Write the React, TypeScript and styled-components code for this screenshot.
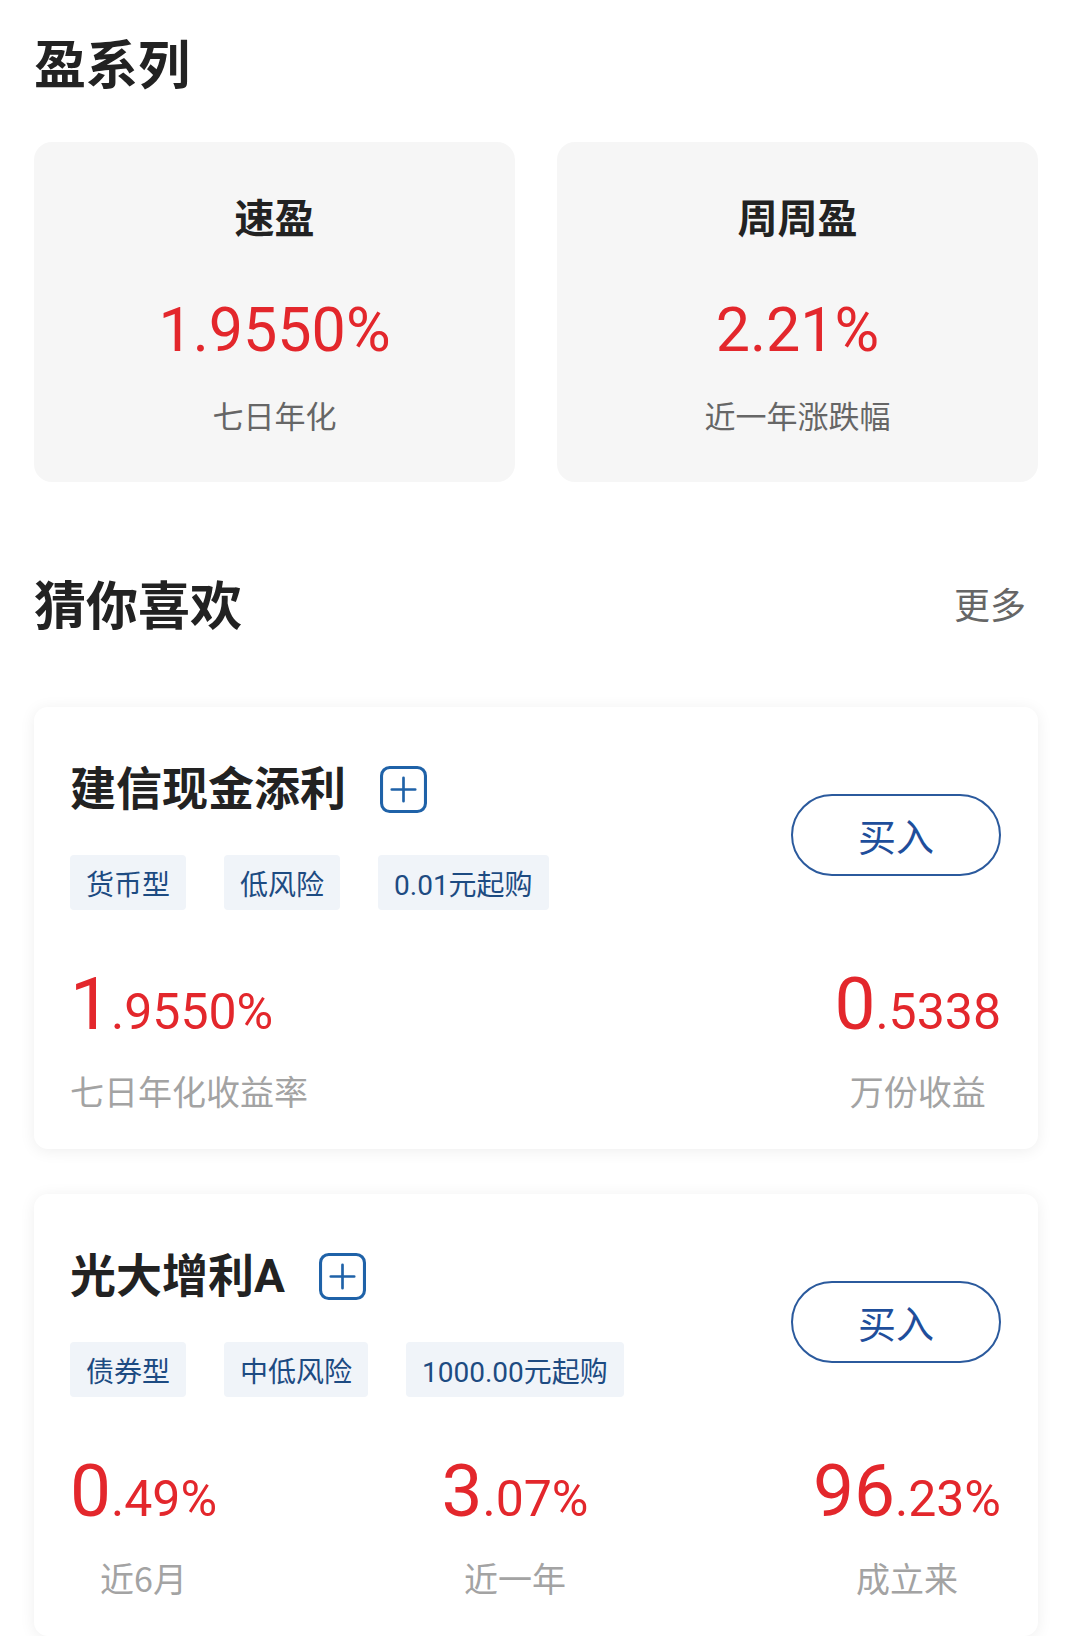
import React from 'react';
import styled, { createGlobalStyle } from 'styled-components';

const GlobalStyle = createGlobalStyle`
  html, body { margin: 0; padding: 0; background: #ffffff; }
  body { font-family: Roboto, "Noto Sans CJK SC", "Noto Sans", sans-serif; color: #222; }
  * { box-sizing: border-box; }
`;

const Page = styled.div`
  width: 1080px;
  padding: 27px 42px 0 34px;
  background: #fff;
`;

const SectionTitle = styled.h2`
  margin: 0;
  font-size: 52px;
  line-height: 70px;
  font-weight: 700;
  color: #222;
  font-family: "Noto Sans CJK SC", sans-serif;
`;

const SeriesGrid = styled.div`
  margin-top: 45px;
  display: grid;
  grid-template-columns: 1fr 1fr;
  gap: 42px;
`;

const SeriesCard = styled.div`
  background: #f6f6f6;
  border-radius: 18px;
  padding: 46px 0 45px;
  display: flex;
  flex-direction: column;
  align-items: center;
`;

const SeriesName = styled.div`
  font-family: "Noto Sans CJK SC", sans-serif;
  font-size: 40px;
  line-height: 56px;
  font-weight: 700;
  color: #222;
`;

const SeriesValue = styled.div`
  margin-top: 48px;
  font-size: 61px;
  line-height: 76px;
  font-weight: 400;
  color: #e3272c;
`;

const SeriesLabel = styled.div`
  margin-top: 25px;
  font-family: "Noto Sans CJK SC", sans-serif;
  font-size: 31px;
  line-height: 44px;
  color: #666;
`;

const SectionHeader = styled.div`
  margin-top: 86px;
  display: flex;
  align-items: center;
  justify-content: space-between;
`;

const MoreLink = styled.span`
  font-family: "Noto Sans CJK SC", sans-serif;
  font-size: 36px;
  line-height: 70px;
  color: #666;
  padding-right: 12px;
`;

const FundList = styled.div`
  margin-top: 69px;
  display: flex;
  flex-direction: column;
  gap: 45px;
`;

const FundCard = styled.div`
  background: #fff;
  border-radius: 14px;
  box-shadow: 0 2px 16px rgba(0, 0, 0, 0.07);
  padding: 52px 37px 34px 36px;
`;

const FundHead = styled.div`
  display: flex;
  align-items: center;
  justify-content: space-between;
`;

const FundInfo = styled.div`
  display: flex;
  flex-direction: column;
`;

const NameRow = styled.div`
  display: flex;
  align-items: center;
  height: 60px;
`;

const FundName = styled.span`
  font-size: 46px;
  line-height: 60px;
  font-weight: 700;
  color: #222;
`;

const AddIcon = styled.svg`
  margin-left: 34px;
  width: 47px;
  height: 47px;
  flex: none;
`;

const TagRow = styled.div`
  margin-top: 36px;
  display: flex;
  gap: 38px;
`;

const Tag = styled.span`
  height: 55px;
  padding: 0 16px;
  display: inline-flex;
  align-items: center;
  background: #f0f4f9;
  border-radius: 4px;
  font-size: 28px;
  color: #1d4b82;
`;

const BuyButton = styled.button`
  width: 210px;
  height: 82px;
  border-radius: 41px;
  border: 2.5px solid #2b5a9d;
  background: #fff;
  color: #1f4e9b;
  font-family: "Noto Sans CJK SC", sans-serif;
  font-size: 38px;
  line-height: 1;
  padding: 0;
  cursor: pointer;
`;

const StatsRow = styled.div`
  margin-top: 54px;
  display: flex;
  justify-content: space-between;
`;

const StatCol = styled.div<{ $align: string }>`
  display: flex;
  flex-direction: column;
  align-items: ${p => p.$align};
`;

const StatValue = styled.div`
  font-size: 73px;
  line-height: 80px;
  color: #e3272c;
  white-space: nowrap;
`;

const StatDecimal = styled.span`
  font-size: 50px;
`;

const StatLabel = styled.div`
  margin-top: 15px;
  font-family: "Noto Sans CJK SC", Roboto, sans-serif;
  font-size: 34px;
  line-height: 48px;
  color: #a3a3a3;
`;

type Stat = { int: string; dec: string; label: string; align: string };
type Fund = { name: string; tags: string[]; stats: Stat[] };

const series = [
  { name: '速盈', value: '1.9550%', label: '七日年化' },
  { name: '周周盈', value: '2.21%', label: '近一年涨跌幅' },
];

const funds: Fund[] = [
  {
    name: '建信现金添利',
    tags: ['货币型', '低风险', '0.01元起购'],
    stats: [
      { int: '1', dec: '.9550%', label: '七日年化收益率', align: 'flex-start' },
      { int: '0', dec: '.5338', label: '万份收益', align: 'center' },
    ],
  },
  {
    name: '光大增利A',
    tags: ['债券型', '中低风险', '1000.00元起购'],
    stats: [
      { int: '0', dec: '.49%', label: '近6月', align: 'center' },
      { int: '3', dec: '.07%', label: '近一年', align: 'center' },
      { int: '96', dec: '.23%', label: '成立来', align: 'center' },
    ],
  },
];

const PlusSquare = () => (
  <AddIcon viewBox="0 0 46 46">
    <rect x="1.5" y="1.5" width="43" height="43" rx="8" fill="none" stroke="#1f62a8" strokeWidth="3" />
    <path d="M11.5 23h23M23 11.5v23" stroke="#1f62a8" strokeWidth="2.6" strokeLinecap="round" />
  </AddIcon>
);

export default function App() {
  return (
    <>
      <GlobalStyle />
      <Page>
        <SectionTitle>盈系列</SectionTitle>
        <SeriesGrid>
          {series.map(s => (
            <SeriesCard key={s.name}>
              <SeriesName>{s.name}</SeriesName>
              <SeriesValue>{s.value}</SeriesValue>
              <SeriesLabel>{s.label}</SeriesLabel>
            </SeriesCard>
          ))}
        </SeriesGrid>

        <SectionHeader>
          <SectionTitle>猜你喜欢</SectionTitle>
          <MoreLink>更多</MoreLink>
        </SectionHeader>

        <FundList>
          {funds.map(f => (
            <FundCard key={f.name}>
              <FundHead>
                <FundInfo>
                  <NameRow>
                    <FundName>{f.name}</FundName>
                    <PlusSquare />
                  </NameRow>
                  <TagRow>
                    {f.tags.map(t => (
                      <Tag key={t}>{t}</Tag>
                    ))}
                  </TagRow>
                </FundInfo>
                <BuyButton>买入</BuyButton>
              </FundHead>
              <StatsRow>
                {f.stats.map(s => (
                  <StatCol key={s.label} $align={s.align}>
                    <StatValue>
                      {s.int}
                      <StatDecimal>{s.dec}</StatDecimal>
                    </StatValue>
                    <StatLabel>{s.label}</StatLabel>
                  </StatCol>
                ))}
              </StatsRow>
            </FundCard>
          ))}
        </FundList>
      </Page>
    </>
  );
}
